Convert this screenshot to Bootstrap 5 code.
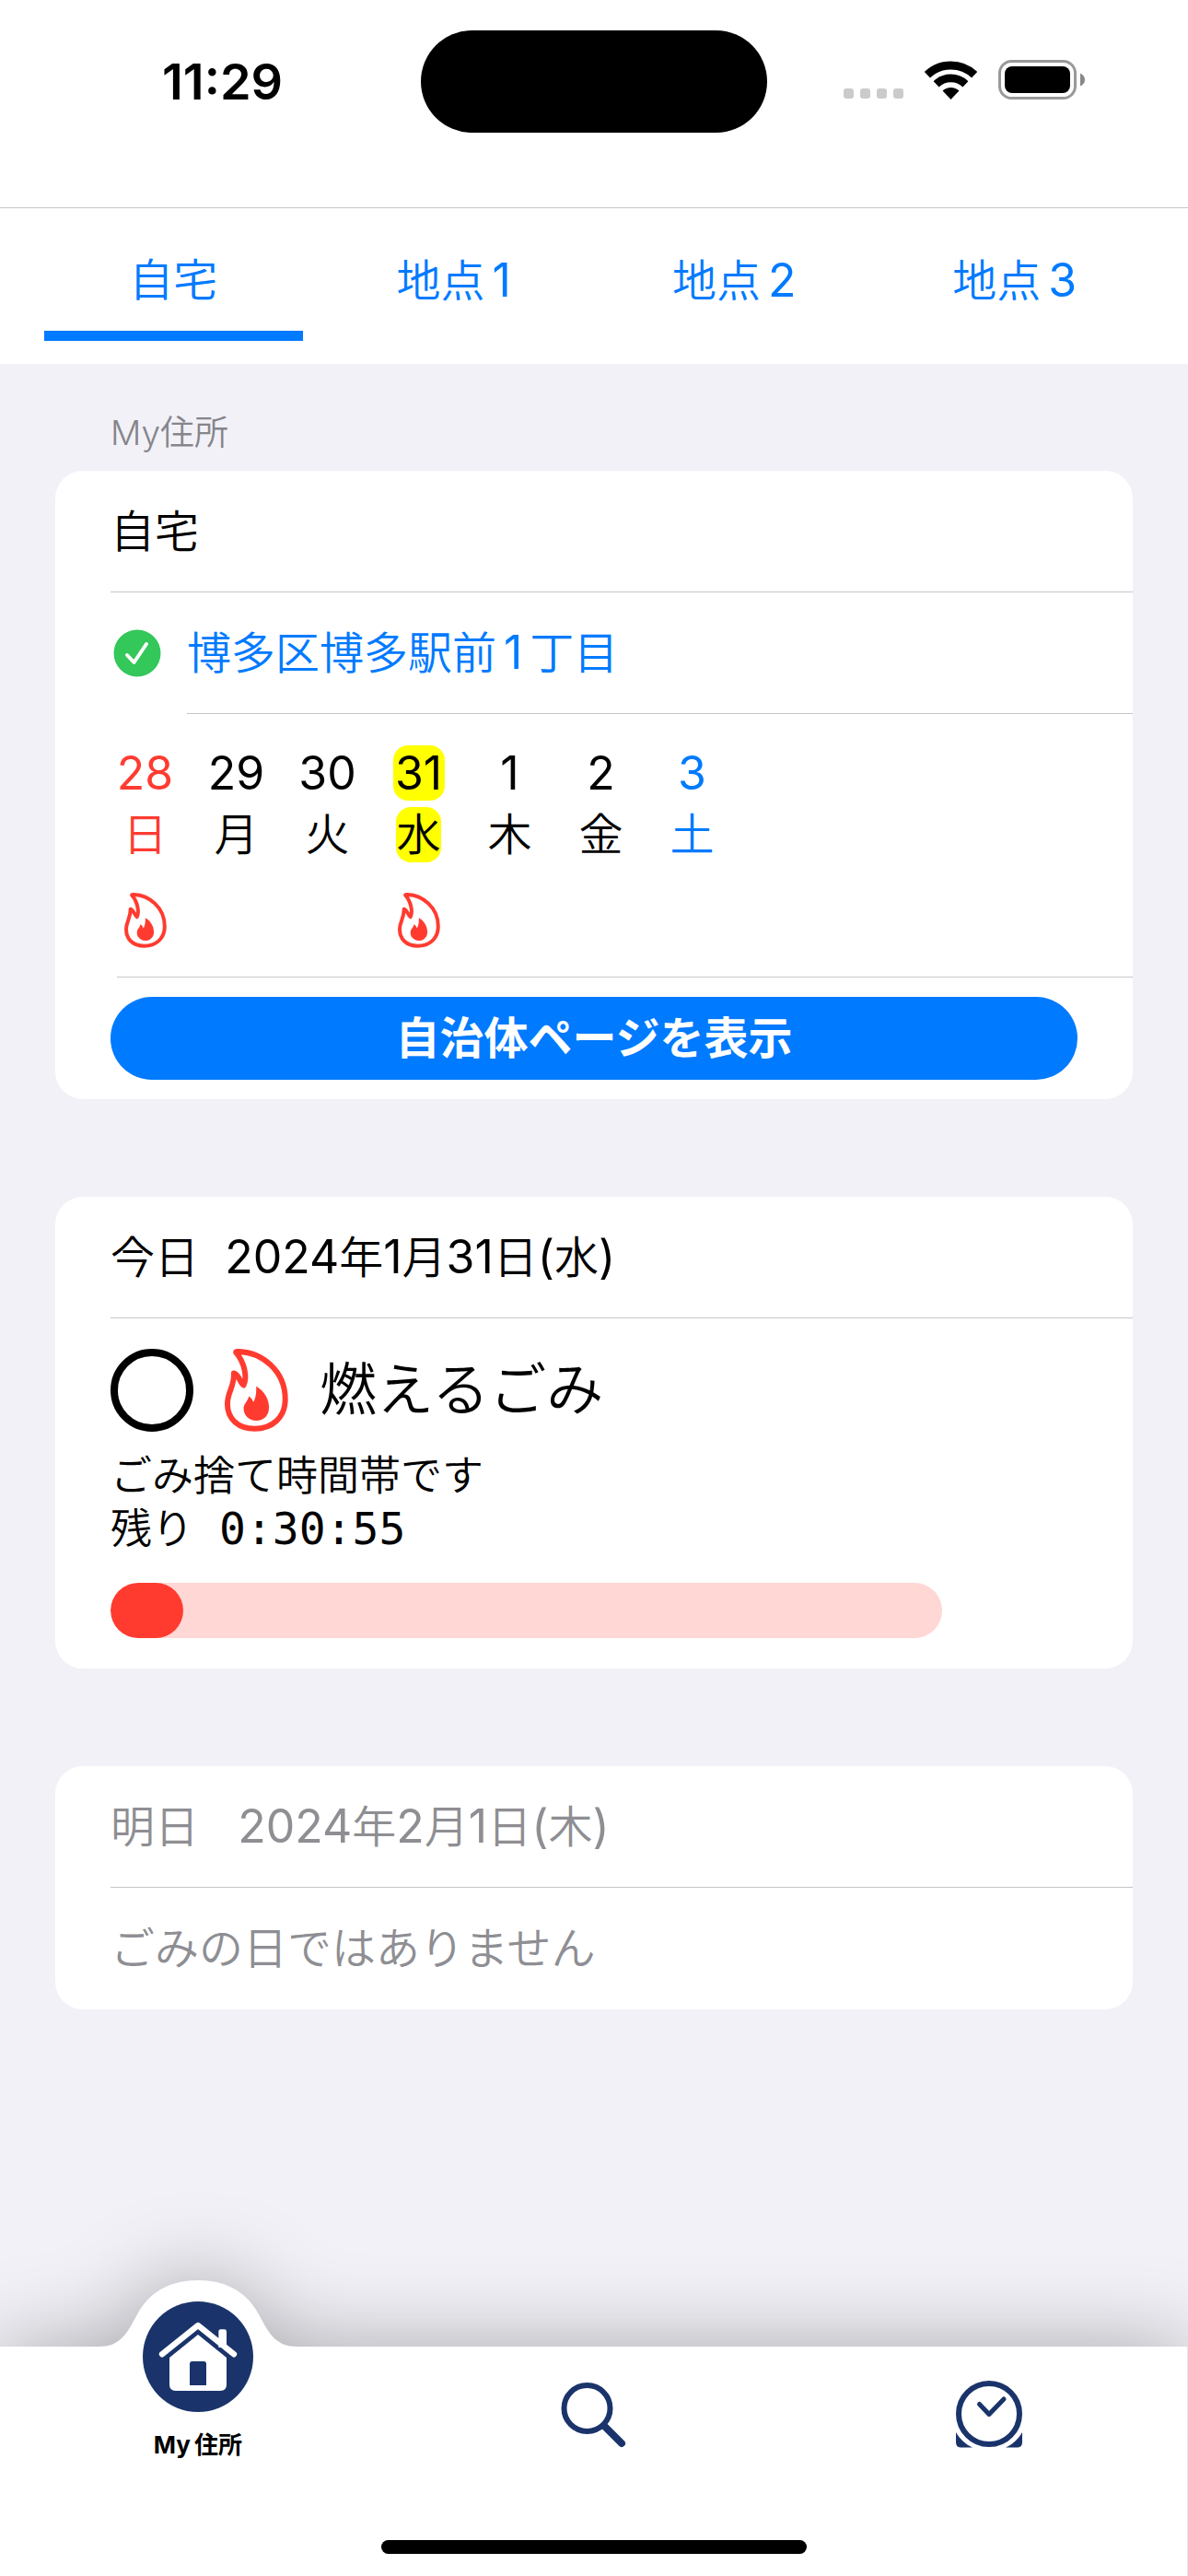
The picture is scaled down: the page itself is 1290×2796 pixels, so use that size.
<!DOCTYPE html>
<html lang="ja">
<head>
<meta charset="utf-8">
<meta name="viewport" content="width=device-width, initial-scale=1">
<title>My住所</title>
<link href="https://cdn.jsdelivr.net/npm/bootstrap@5.3.0/dist/css/bootstrap.min.css" rel="stylesheet">
<style>
  :root { --ios-blue: #007aff; --ios-red: #ff3b30; --ios-gray: #8e8e93; --navy: #1a346b; --line: #c6c6c8; }
  body { font-family: Inter, "Noto Sans CJK JP", sans-serif; font-size: 48px; font-weight: 350; line-height: 60px; color: #000; background: #f2f1f7; }
  a { text-decoration: none; }
  .latin { font-size: 50px; font-weight: 400; }
  .txt-blue { color: var(--ios-blue); }
  .txt-red { color: var(--ios-red); }
  .txt-gray { color: var(--ios-gray); }

  .status-bar { height: 226px; padding: 33px 112px 0 176px; border-bottom: 1px solid var(--line); }
  .status-row { height: 111px; margin-right: -112px; margin-left: -176px; }
  .status-time { padding-left: 176px; font-size: 54px; font-weight: 600; }
  .status-icons { padding-right: 111px; gap: 23px; }
  .status-icons svg { margin-bottom: 4px; }
  .island { width: 376px; height: 111px; background: #000; }

  .place-tabs { padding: 0 48px 25px; gap: 24px; }
  .place-tabs .nav-link { height: 144px; padding: 48px 0 0; border-radius: 0; border-bottom: 11px solid transparent; color: var(--ios-blue); }
  .place-tabs .nav-link.active { border-color: var(--ios-blue); }
  .spaced { margin-left: 8px; }
  .spaced-end { margin-right: 8px; }

  .content { padding: 51px 60px 0; }
  .section-label { font-size: 37px; line-height: 48px; margin: 0 60px 17px; font-weight: 350; color: #85858b; }
  .panel { border: 0; border-radius: 30px; margin-bottom: 106px; overflow: hidden; }
  .line-row { margin-left: 60px; min-height: 132px; border-bottom: 1px solid var(--line); }
  .line-row.last { border-bottom: 0; }
  .check-row { margin-left: 0; min-height: 132px; padding-left: 63px; }
  .check-row .lined { min-height: 132px; border-bottom: 1px solid var(--line); }

  .week { padding: 34px 0 31px; gap: 24px; }
  .week-wrap { padding-left: 60px; }
  .week-rule { height: 1px; margin-left: 67px; background: var(--line); }
  .day { width: 75px; }
  .day-num, .day-name { margin-bottom: 7px; border-radius: 16px; }
  .day-num { width: 56px; }
  .today .day-num, .today .day-name { background: #ff0; }
  .day svg { margin-top: 26px; }

  .page-btn { height: 90px; border: 0; background: var(--ios-blue); font-size: 48px; font-weight: 700; line-height: 60px; padding: 0; }
  .btn-pad { padding: 21px 60px; }

  .trash-body { padding: 33px 60px; }
  .done-check { width: 90px; height: 90px; margin: 0; border: 8px solid #000; border-radius: 50% !important; }
  .trash-name { font-size: 62px; line-height: 90px; }
  .trash-note { margin: 19px 0 29px; font-size: 45px; line-height: 58px; }
  .timer { font-family: "DejaVu Sans Mono", monospace; font-size: 48px; font-weight: 400; line-height: 1; margin-left: 28px; }
  .time-left { width: 86%; height: 60px; border-radius: 30px; background: #ffd7d5; }
  .time-left .progress-bar { border-radius: 30px; background: var(--ios-red); }

  .tab-bar { background: #fff; border-right: 1px solid #e6e6e8; filter: drop-shadow(0 0 46px rgba(0, 0, 0, .3)); }
  .tab-bar .bar-link { height: 210px; padding-top: 37px; color: var(--navy); }
  .home-link { position: relative; }
  .home-link .bump { position: absolute; left: 50%; top: -72px; margin-left: -108px; }
  .home-link .badge-icon { position: absolute; left: 50%; top: -49px; margin-left: -60px; }
  .bar-label { margin-top: 52px; font-size: 26px; line-height: 36px; font-weight: 700; color: #000; }
  .bar-label span { margin-right: 4px; }
  .home-indicator { width: 462px; height: 15px; background: #000; margin: 0 auto 24px; }
</style>
</head>
<body class="d-flex flex-column min-vh-100">

<svg width="0" height="0" class="position-absolute" aria-hidden="true">
  <symbol id="flame" viewBox="0 0 208 271">
    <path d="M37 12C36 8 42 9 48 9C120 12 198 70 198 165C198 225 155 261 98 261C40 261 9 225 9 180C9 140 32 125 30 80C46 82 50 112 62 119C74 95 66 45 37 12Z" fill="none" stroke="#ff3b30" stroke-width="18" stroke-linejoin="round"/>
    <path d="M103 123C120 132 145 156 145 192C145 218 127 235 104 235C80 235 62 218 62 196C62 178 75 174 79 155C86 160 91 166 94 174C102 160 104 142 103 123Z" fill="#ff3b30"/>
  </symbol>
</svg>

<header class="status-bar bg-white">
  <div class="status-row d-flex align-items-center">
    <div class="status-time flex-fill w-25">11:29</div>
    <div class="island rounded-pill flex-shrink-0"></div>
    <div class="status-icons flex-fill w-25 d-flex justify-content-end align-items-center">
      <svg width="65" height="43" viewBox="0 0 65 43" fill="#cbcbcb"><rect y="31" width="11" height="11" rx="3"/><rect x="18" y="31" width="11" height="11" rx="3"/><rect x="36" y="31" width="11" height="11" rx="3"/><rect x="54" y="31" width="11" height="11" rx="3"/></svg>
      <svg width="57" height="42" viewBox="0 0 172 126"><path d="M8.7 45.4A112 112 0 0 1 163.3 45.4" fill="none" stroke="#000" stroke-width="27"/><path d="M38 76A69.5 69.5 0 0 1 134 76" fill="none" stroke="#000" stroke-width="26"/><path d="M86 126L59 98A39 39 0 0 1 113 98Z"/></svg>
      <svg width="95" height="43" viewBox="0 0 95 43"><rect x="1.5" y="1.5" width="82" height="40" rx="13" fill="none" stroke="#999" stroke-width="3"/><rect x="7" y="7" width="71" height="29" rx="8"/><path d="M89 14.500Q94 17 94 21.500Q94 26 89 28.500Z" fill="#888"/></svg>
    </div>
  </div>
</header>

<nav class="place-tabs nav nav-justified flex-nowrap bg-white text-center">
  <a class="nav-link active bg-white w-100" href="#home">自宅</a>
  <a class="nav-link w-100" href="#p1">地点<span class="latin spaced">1</span></a>
  <a class="nav-link w-100" href="#p2">地点<span class="latin spaced">2</span></a>
  <a class="nav-link w-100" href="#p3">地点<span class="latin spaced">3</span></a>
</nav>

<main class="content flex-grow-1">
  <h2 class="section-label">My住所</h2>

  <section class="panel card">
    <div class="line-row d-flex align-items-center">自宅</div>
    <div class="check-row d-flex align-items-center">
      <svg class="me-4 flex-shrink-0" width="52" height="52" viewBox="0 0 52 52"><circle cx="26" cy="26" r="25.500" fill="#34c759"/><path d="M15 28L22.500 36L36 16" fill="none" stroke="#fff" stroke-width="4" stroke-linecap="round" stroke-linejoin="round"/></svg>
      <div class="lined d-flex align-items-center flex-grow-1 ms-1"><a class="txt-blue" href="#address">博多区博多駅前<span class="latin spaced spaced-end">1</span>丁目</a></div>
    </div>
    <div class="week-wrap">
      <div class="week d-flex text-center">
        <div class="day d-flex flex-column align-items-center txt-red"><div class="day-num latin d-flex justify-content-center">28</div><div class="day-name">日</div><svg width="46" height="60"><use href="#flame"/></svg></div>
        <div class="day d-flex flex-column align-items-center"><div class="day-num latin d-flex justify-content-center">29</div><div class="day-name">月</div></div>
        <div class="day d-flex flex-column align-items-center"><div class="day-num latin d-flex justify-content-center">30</div><div class="day-name">火</div></div>
        <div class="day d-flex flex-column align-items-center today"><div class="day-num latin d-flex justify-content-center">31</div><div class="day-name">水</div><svg width="46" height="60"><use href="#flame"/></svg></div>
        <div class="day d-flex flex-column align-items-center"><div class="day-num latin d-flex justify-content-center">1</div><div class="day-name">木</div></div>
        <div class="day d-flex flex-column align-items-center"><div class="day-num latin d-flex justify-content-center">2</div><div class="day-name">金</div></div>
        <div class="day d-flex flex-column align-items-center txt-blue"><div class="day-num latin d-flex justify-content-center">3</div><div class="day-name">土</div></div>
      </div>
    </div>
    <div class="week-rule"></div>
    <div class="btn-pad"><button type="button" class="page-btn btn btn-primary rounded-pill w-100">自治体ページを表示</button></div>
  </section>

  <section class="panel card">
    <div class="line-row d-flex align-items-center"><div>今日<span class="latin">&nbsp; 2024</span>年<span class="latin">1</span>月<span class="latin">31</span>日<span class="latin">(</span>水<span class="latin">)</span></div></div>
    <div class="trash-body">
      <div class="d-flex align-items-center">
        <input class="done-check form-check-input" type="checkbox" id="done">
        <label class="trash-name d-flex align-items-center" for="done"><svg class="ms-4 me-4" width="89" height="90"><use href="#flame"/></svg>燃えるごみ</label>
      </div>
      <div class="trash-note">ごみ捨て時間帯です<br>残り<span class="timer">0:30:55</span></div>
      <div class="time-left progress" role="progressbar" aria-label="残り時間" aria-valuenow="9" aria-valuemin="0" aria-valuemax="100"><div class="progress-bar" style="width: 8.7%"></div></div>
    </div>
  </section>

  <section class="panel card txt-gray">
    <div class="line-row d-flex align-items-center"><div>明日<span class="latin">&nbsp; &nbsp;2024</span>年<span class="latin">2</span>月<span class="latin">1</span>日<span class="latin">(</span>木<span class="latin">)</span></div></div>
    <div class="line-row last d-flex align-items-center">ごみの日ではありません</div>
  </section>
</main>

<footer class="tab-bar">
  <nav class="d-flex text-center">
    <a class="bar-link home-link w-100" href="#home">
      <svg class="bump" width="216" height="73" viewBox="0 0 216 73"><path d="M0 73V72C12 72 18 69 24 64C34 55 38 43 45 32C58 11 80 0 108 0S158 11 171 32C178 43 182 55 192 64C198 69 204 72 216 72V73Z" fill="#fff"/></svg>
      <svg class="badge-icon" width="120" height="120" viewBox="0 0 360 360"><circle cx="180" cy="180" r="180" fill="#1a346b"/><path d="M247 150V98Q247 91 254 91H266Q273 91 273 98V150Z" fill="#fff"/><path d="M63 172L180 78L297 172" fill="none" stroke="#fff" stroke-width="19" stroke-linecap="round" stroke-linejoin="round"/><path d="M180 108L273 183V271Q273 291 253 291H107Q87 291 87 271V183Z" fill="#fff"/><path d="M153 273V203Q153 195 161 195H199Q207 195 207 203V273Z" fill="#1a346b"/></svg>
      <div class="bar-label"><span>My</span>住所</div>
    </a>
    <a class="bar-link w-100" href="#search" aria-label="検索">
      <svg class="mx-auto d-block" width="72" height="73" viewBox="0 0 72 73" fill="none" stroke="#1a346b"><ellipse cx="28.500" cy="30" rx="25" ry="25" stroke-width="6"/><path d="M48 50L66 68" stroke-width="8" stroke-linecap="round"/></svg>
    </a>
    <a class="bar-link w-100" href="#alarm" aria-label="アラーム">
      <svg class="mx-auto d-block" width="72" height="73" viewBox="0 0 72 73" fill="none" stroke="#1a346b"><circle cx="36" cy="36" r="33" stroke-width="6"/><path d="M25.500 25.500L36 36.500L52 20" stroke-width="5" stroke-linecap="round" stroke-linejoin="round"/><path d="M0 56C4 63 10 69 18 72.500H5Q0 72 0 67ZM72 56C68 63 62 69 54 72.500H67Q72 72 72 67Z" fill="#1a346b" stroke="none"/></svg>
    </a>
  </nav>
  <div class="home-indicator rounded-pill"></div>
</footer>

<script src="https://cdn.jsdelivr.net/npm/bootstrap@5.3.0/dist/js/bootstrap.bundle.min.js"></script>
</body>
</html>
